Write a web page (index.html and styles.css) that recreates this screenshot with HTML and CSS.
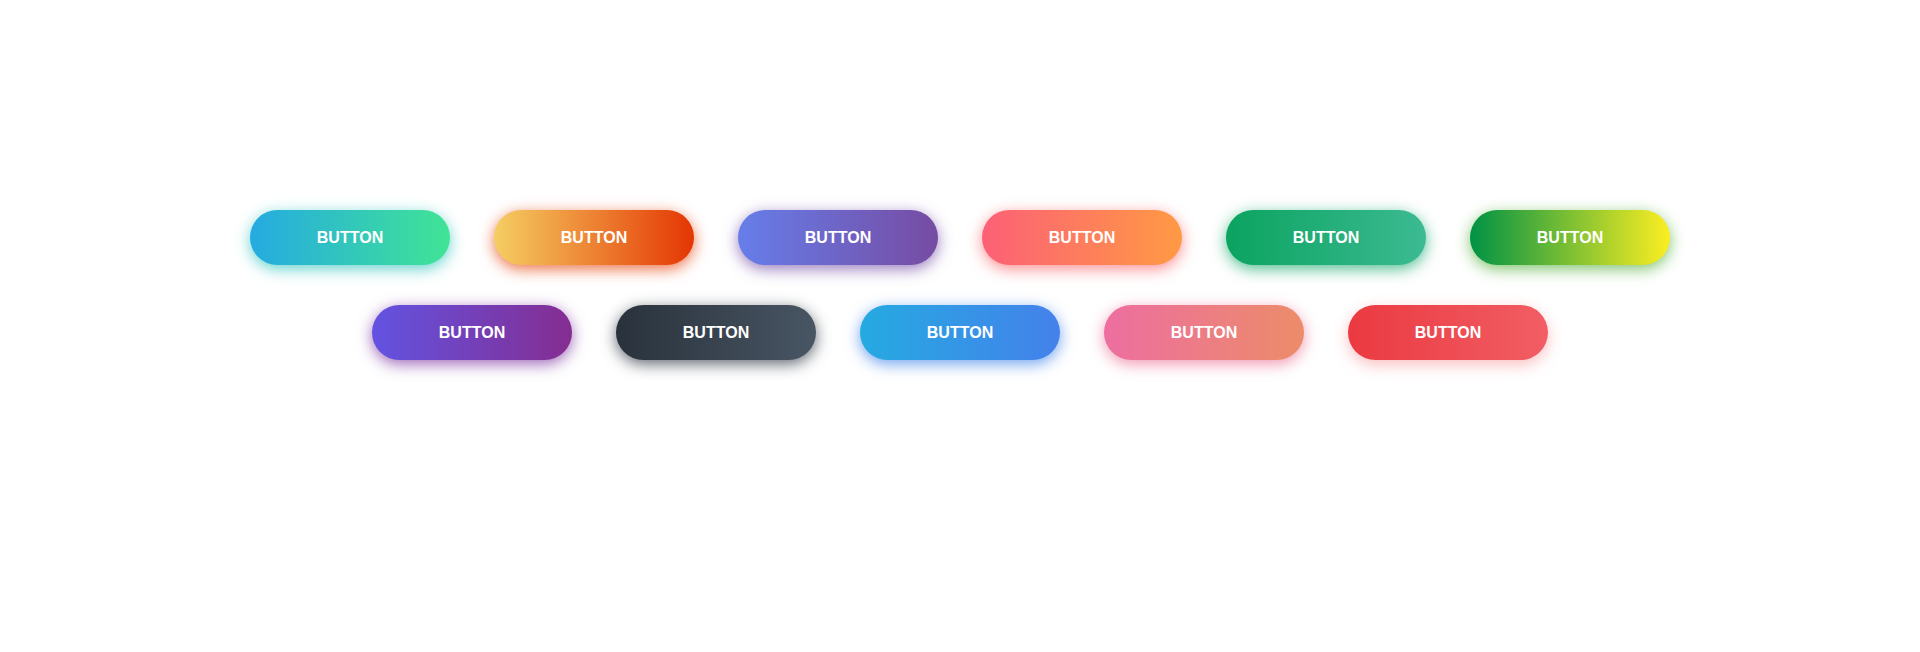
FILE: index.html
```html
<!DOCTYPE html>
<html>
<head>
<meta charset="utf-8">
<link rel="stylesheet" href="styles.css">
</head>
<body>
<div class="buttons">
  <button class="btn color-1">BUTTON</button>
  <button class="btn color-2">BUTTON</button>
  <button class="btn color-3">BUTTON</button>
  <button class="btn color-4">BUTTON</button>
  <button class="btn color-5">BUTTON</button>
  <button class="btn color-6">BUTTON</button>
  <button class="btn color-7">BUTTON</button>
  <button class="btn color-8">BUTTON</button>
  <button class="btn color-9">BUTTON</button>
  <button class="btn color-10">BUTTON</button>
  <button class="btn color-11">BUTTON</button>
</div>
</body>
</html>
```
FILE: styles.css
```css
html, body {
  margin: 0;
}
body {
  min-height: 652px;
  font-family: "Liberation Sans", Arial, sans-serif;
}
.buttons {
  display: flex;
  flex-wrap: wrap;
  justify-content: center;
  column-gap: 44px;
  row-gap: 40px;
  max-width: 1523px;
  margin: 0 auto;
  padding: 210px 0 80px;
}
.btn {
  width: 200px;
  height: 55px;
  font-family: "Liberation Sans", Arial, sans-serif;
  font-size: 16px;
  font-weight: 700;
  color: #fff;
  border: none;
  border-radius: 50px;
  background-size: 300% 100%;
  text-align: center;
  padding: 0;
  cursor: pointer;
}
.color-1 { background-image: linear-gradient(to right, #25aae1, #40e495, #30dd8a, #2bb673); box-shadow: 0 4px 15px 0 rgba(49, 196, 190, 0.75); }
.color-2 { background-image: linear-gradient(to right, #f5ce62, #e43603, #fa7199, #e85a19); box-shadow: 0 4px 15px 0 rgba(229, 66, 10, 0.75); }
.color-3 { background-image: linear-gradient(to right, #667eea, #764ba2, #6b8dd6, #8e37d7); box-shadow: 0 4px 15px 0 rgba(116, 79, 168, 0.75); }
.color-4 { background-image: linear-gradient(to right, #fc6076, #ff9a44, #ef9d43, #e75516); box-shadow: 0 4px 15px 0 rgba(252, 104, 110, 0.75); }
.color-5 { background-image: linear-gradient(to right, #0ba360, #3cba92, #30dd8a, #2bb673); box-shadow: 0 4px 15px 0 rgba(23, 168, 108, 0.75); }
.color-6 { background-image: linear-gradient(to right, #009245, #fcee21, #00a8c5, #d9e021); box-shadow: 0 4px 15px 0 rgba(83, 176, 57, 0.75); }
.color-7 { background-image: linear-gradient(to right, #6253e1, #852d91, #a3a1ff, #f24645); box-shadow: 0 4px 15px 0 rgba(126, 52, 161, 0.75); }
.color-8 { background-image: linear-gradient(to right, #29323c, #485563, #2b5876, #4e4376); box-shadow: 0 4px 15px 0 rgba(45, 54, 65, 0.75); }
.color-9 { background-image: linear-gradient(to right, #25aae1, #4481eb, #04befe, #3f86ed); box-shadow: 0 4px 15px 0 rgba(65, 132, 234, 0.75); }
.color-10 { background-image: linear-gradient(to right, #ed6ea0, #ec8c69, #f7186a, #fbb03b); box-shadow: 0 4px 15px 0 rgba(236, 116, 149, 0.75); }
.color-11 { background-image: linear-gradient(to right, #eb3941, #f15e64, #e14e53, #e2373f); box-shadow: 0 5px 15px rgba(242, 97, 103, 0.4); }
```
